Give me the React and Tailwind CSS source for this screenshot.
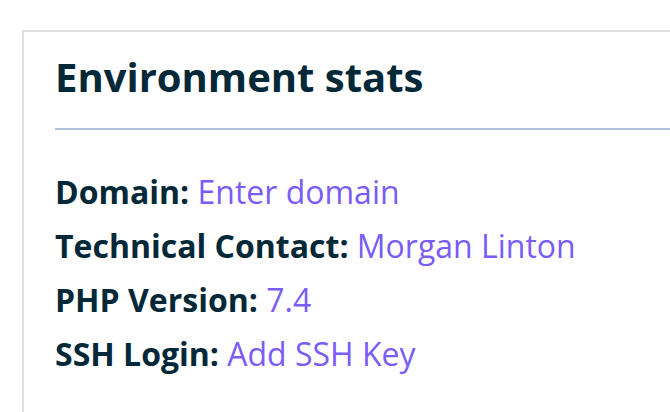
export default function App() {
  const rows = [
    ["Domain:", "Enter domain"],
    ["Technical Contact:", "Morgan Linton"],
    ["PHP Version:", "7.4"],
    ["SSH Login:", "Add SSH Key"],
  ];
  return (
    <div className="w-[670px] h-[412px] overflow-hidden bg-white pt-[30px] pl-[22px]" style={{ fontFamily: '"Open Sans", sans-serif' }}>
      <div className="w-[700px] h-[420px] border-2 border-[#dedede] pl-[31px] pt-[21px]">
        <h2 className="text-[40px] leading-[48px] font-bold text-[#032838]">Environment stats</h2>
        <div className="mt-[27px] h-[2px] bg-[#b0c4d8]"></div>
        <div className="mt-[35px]">
          {rows.map(([k, v]) => (
            <div key={k} className="text-[32px] leading-[54px] text-[#032838]">
              <span className="font-bold">{k}</span>{" "}
              <span className="text-[#7b5cf5]">{v}</span>
            </div>
          ))}
        </div>
      </div>
    </div>
  );
}
